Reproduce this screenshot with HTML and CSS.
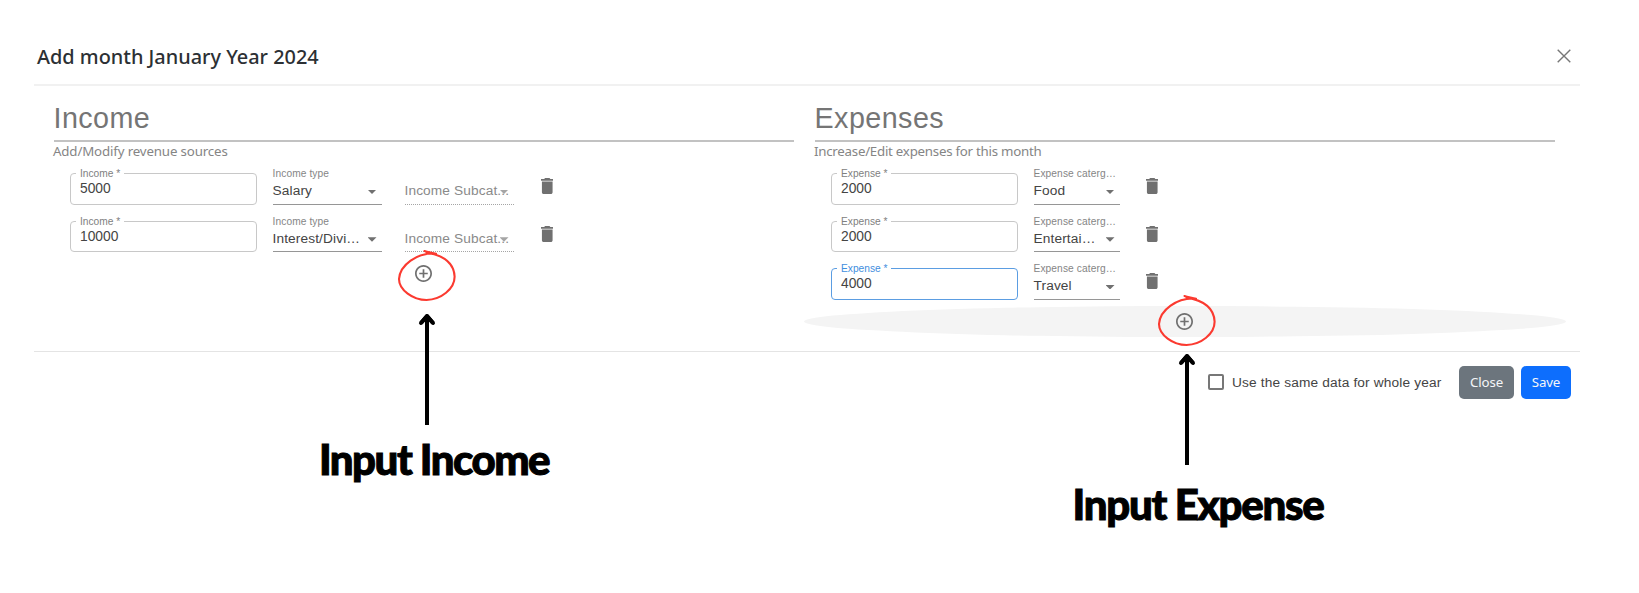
FILE: index.html
```html
<!DOCTYPE html>
<html lang="en">
<head>
<meta charset="utf-8">
<title>Add month January Year 2024</title>
<link rel="stylesheet" href="styles.css">
</head>
<body>
<svg class="defs" aria-hidden="true">
  <symbol id="trash" viewBox="5 3 14 18"><path d="M6 19c0 1.100.9 2 2 2h8c1.100 0 2-.9 2-2V7H6v12zM19 4h-3.500l-1-1h-5l-1 1H5v2h14V4z"/></symbol>
  <symbol id="plus" viewBox="2 2 20 20"><path d="M13 7h-2v4H7v2h4v4h2v-4h4v-2h-4V7zm-1-5C6.480 2 2 6.480 2 12s4.480 10 10 10 10-4.480 10-10S17.520 2 12 2zm0 18c-4.410 0-8-3.590-8-8s3.590-8 8-8 8 3.590 8 8-3.590 8-8 8z"/></symbol>
  <symbol id="ring" viewBox="0 0 60 52"><path d="M27.500 1C31 2.200 35 2.600 39 3.800M38 3.600C20 2.500 3 15 2 29C2 40 16 50 29.500 50C44 49.500 57.800 39 57.600 26.500C57 14 47 5.500 29.500 2.400" fill="none" stroke="#fb3a30" stroke-width="2.100" stroke-linecap="round"/></symbol>
  <symbol id="arrow" viewBox="0 0 18 113"><path d="M9 113V4M3 11L9 4L15 11" fill="none" stroke="#000" stroke-width="4" stroke-linejoin="round"/><path d="M3 11L9 4L15 11" fill="none" stroke="#000" stroke-width="4" stroke-linecap="round" stroke-linejoin="round"/></symbol>
</svg>

<div class="dialog">
  <header class="header">
    <h1 class="title">Add month January Year 2024</h1>
    <svg class="dismiss" viewBox="0 0 14 14"><path d="M.7.7l12.600 12.600M13.300.7L.7 13.300"/></svg>
  </header>

  <main class="columns">
    <section class="column">
      <h2 class="heading">Income</h2>
      <p class="hint">Add/Modify revenue sources</p>
      <div class="rows">
        <div class="row">
          <fieldset class="field"><legend>Income *</legend><div class="value">5000</div></fieldset>
          <div class="select"><span class="label">Income type</span><div class="choice"><span>Salary</span><i class="caret"></i></div></div>
          <div class="select disabled"><span class="label"></span><div class="choice"><span>Income Subcat...</span><i class="caret"></i></div></div>
          <svg class="trash"><use href="#trash"/></svg>
        </div>
        <div class="row">
          <fieldset class="field"><legend>Income *</legend><div class="value">10000</div></fieldset>
          <div class="select"><span class="label">Income type</span><div class="choice"><span>Interest/Divi…</span><i class="caret"></i></div></div>
          <div class="select disabled"><span class="label"></span><div class="choice"><span>Income Subcat...</span><i class="caret"></i></div></div>
          <svg class="trash"><use href="#trash"/></svg>
        </div>
      </div>
      <div class="add"><svg class="plus"><use href="#plus"/></svg></div>
    </section>

    <section class="column expenses">
      <h2 class="heading">Expenses</h2>
      <p class="hint">Increase/Edit expenses for this month</p>
      <div class="rows">
        <div class="row">
          <fieldset class="field"><legend>Expense *</legend><div class="value">2000</div></fieldset>
          <div class="select"><span class="label">Expense caterg…</span><div class="choice"><span>Food</span><i class="caret"></i></div></div>
          <svg class="trash"><use href="#trash"/></svg>
        </div>
        <div class="row">
          <fieldset class="field"><legend>Expense *</legend><div class="value">2000</div></fieldset>
          <div class="select"><span class="label">Expense caterg…</span><div class="choice"><span>Entertai…</span><i class="caret"></i></div></div>
          <svg class="trash"><use href="#trash"/></svg>
        </div>
        <div class="row">
          <fieldset class="field focused"><legend>Expense *</legend><div class="value">4000</div></fieldset>
          <div class="select"><span class="label">Expense caterg…</span><div class="choice"><span>Travel</span><i class="caret"></i></div></div>
          <svg class="trash"><use href="#trash"/></svg>
        </div>
      </div>
      <div class="add hovered"><svg class="plus"><use href="#plus"/></svg></div>
    </section>
  </main>

  <footer class="footer">
    <span class="checkbox"></span>
    <span class="check-label">Use the same data for whole year</span>
    <button class="button secondary">Close</button>
    <button class="button primary">Save</button>
  </footer>
</div>

<div class="callout callout-income">
  <svg class="ring"><use href="#ring"/></svg>
  <svg class="arrow"><use href="#arrow"/></svg>
  <div class="caption">Input Income</div>
</div>
<div class="callout callout-expense">
  <svg class="ring"><use href="#ring"/></svg>
  <svg class="arrow"><use href="#arrow"/></svg>
  <div class="caption">Input Expense</div>
</div>
</body>
</html>
```
FILE: styles.css
```css
* { box-sizing: border-box; }
body {
  margin: 0;
  height: 593px;
  position: relative;
  overflow: hidden;
  background: #fff;
  font-family: "Liberation Sans", Arial, sans-serif;
}
.defs { display: none; }
.dialog { width: 1546px; margin-left: 34px; }

.header {
  height: 86px;
  padding: 28px 9px 0 3px;
  display: flex;
  align-items: center;
  justify-content: space-between;
  border-bottom: 2px solid #f1f1f1;
}
.title {
  margin: 0;
  padding-top: 2px;
  font: 500 19.900px/28px "Noto Sans", sans-serif;
  color: #2c3034;
  white-space: nowrap;
}
.dismiss { width: 14px; height: 14px; fill: none; stroke: #777; stroke-width: 1.400; }

.columns { display: flex; gap: 21px; height: 265px; padding-left: 20px; }
.column { width: 740px; }
.heading {
  margin: 8px 0 0;
  height: 48px;
  font-size: 28.700px;
  line-height: 48px;
  font-weight: 400;
  letter-spacing: .45px;
  text-indent: -.5px;
  color: #757575;
  border-bottom: 2px solid #c2c2c2;
}
.hint {
  margin: 0 0 0 -1px;
  height: 25px;
  font: 13.300px/19px "Noto Sans", sans-serif;
  letter-spacing: -.15px;
  color: #858585;
  white-space: nowrap;
}
.expenses .hint { letter-spacing: -.25px; }
.rows { padding-left: 16px; }
.row { display: flex; height: 47.700px; }

.field {
  width: 187px;
  height: 37.500px;
  min-width: 0;
  margin: 0 15.500px 0 0;
  padding: 0 9px 0 5px;
  border: 1px solid #c8c8c8;
  border-radius: 4px;
}
.field legend {
  padding: 0 4px;
  font-size: 10.200px;
  line-height: 13px;
  color: #808080;
}
.value { padding: 1px 0 0 4px; font-size: 13.800px; line-height: 16px; color: #444; }
.focused { border-color: #5b9de2; }
.focused legend { color: #3f8ede; }

.select { width: 109px; height: 38px; margin-right: 23px; }
.expenses .select { width: 86px; margin-right: 26px; }
.label {
  display: block;
  height: 13px;
  font-size: 10.200px;
  letter-spacing: .1px;
  line-height: 13px;
  color: #858585;
  white-space: nowrap;
}
.choice {
  height: 24.500px;
  display: flex;
  justify-content: space-between;
  padding-right: 5px;
  border-bottom: 1px solid #969696;
  font-size: 13.700px;
  letter-spacing: .12px;
  line-height: 21.500px;
  color: #444;
  white-space: nowrap;
}
.caret {
  width: 9px;
  height: 4.500px;
  flex: none;
  margin-top: 9.500px;
  background: #707070;
  clip-path: polygon(0 0, 100% 0, 50% 100%);
}
.disabled .choice { color: #8a8a8a; border-bottom: 1px dotted #a5a5a5; }
.disabled .caret { margin-left: -12px; background: #a5a5a5; }
.trash { width: 12.500px; height: 16px; margin-top: 11px; margin-left: 4px; fill: #707070; }
.expenses .trash { margin-left: 0; }

.add {
  width: 762px;
  height: 31px;
  margin: -4px 0 0 -11.500px;
  display: flex;
  align-items: center;
  justify-content: center;
  border-radius: 50%;
}
.hovered { background: #f4f4f4; }
.plus { width: 17px; height: 17px; fill: #707070; }

.footer {
  height: 61px;
  padding: 0 9px 0 0;
  display: flex;
  align-items: center;
  justify-content: flex-end;
  border-top: 1px solid #e4e4e4;
}
.checkbox { width: 16px; height: 16px; margin-right: 8px; border: 2px solid #777; border-radius: 2px; }
.check-label { width: 210px; margin-right: 17px; font-size: 13.700px; letter-spacing: .15px; color: #444; white-space: nowrap; }
.button {
  height: 33px;
  padding: 0;
  border: 0;
  border-radius: 5px;
  font: 13.300px/33px "Noto Sans", sans-serif;
  letter-spacing: -.15px;
  color: #f4f6f8;
}
.secondary { width: 55px; margin-right: 7px; background: #6c757d; }
.primary { width: 50px; background: #0d6efd; }

/* Hand-drawn callouts lying over the dialog */
.callout { position: absolute; width: 260px; display: flex; flex-direction: column; align-items: center; }
.callout-income { left: 297px; top: 250px; }
.callout-expense { left: 1057px; top: 295px; }
.ring { width: 60px; height: 52px; }
.arrow { width: 18px; height: 113px; margin-top: 10px; }
.callout-expense .arrow { margin-top: 5px; }
.caption {
  margin: 8px 0 0 14px;
  font: 900 42px/52px Lato, sans-serif;
  letter-spacing: -1.500px;
  -webkit-text-stroke: 1px #000;
  color: #000;
  white-space: nowrap;
}
.callout-expense .caption { margin: 13px 0 0 22px; letter-spacing: -1.300px; }
```
